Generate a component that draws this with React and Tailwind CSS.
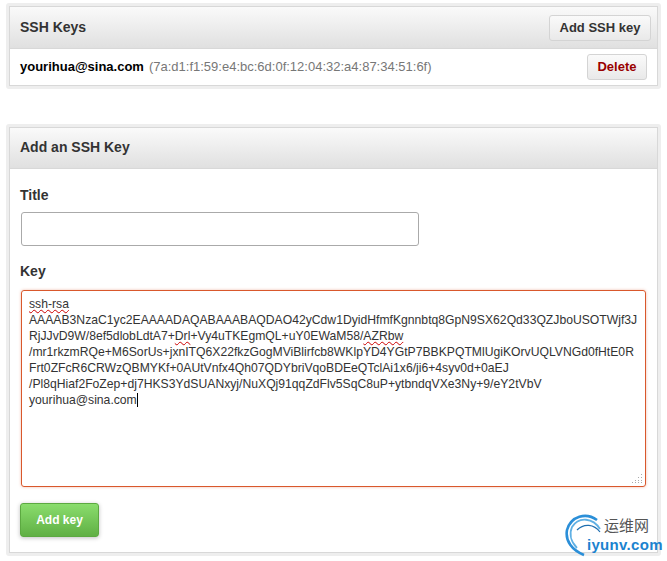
const font = { fontFamily: '"Liberation Sans", "Noto Sans CJK SC", sans-serif' };

function Panel({ title, action, children, className = "", headerClass = "h-[42px]" }) {
  return (
    <section className={"rounded-[3px] bg-[#eeeeee] p-[3px] " + className}>
      <div className="border border-[#d8d8d8] bg-white">
        <div className={"flex items-center justify-between border-b border-[#d8d8d8] bg-gradient-to-b from-[#fafafa] to-[#e0e0e0] pl-[10px] pr-[6px] " + headerClass}>
          <h3 className="text-[14px] font-bold text-[#333333]">{title}</h3>
          {action}
        </div>
        {children}
      </div>
    </section>
  );
}

function GrayButton({ children, className = "" }) {
  return (
    <button className={"rounded-[3px] border border-[#d4d4d4] bg-gradient-to-b from-[#fafafa] to-[#e9e9e9] text-[13px] font-bold " + className}>
      {children}
    </button>
  );
}

const Wavy = ({ children }) => (
  <span className="underline decoration-wavy decoration-[#cc0000] decoration-1 underline-offset-[1px]">{children}</span>
);

export default function App() {
  return (
    <div style={font} className="h-[561px] w-[667px] overflow-hidden bg-white pl-[6px] pt-[3px]">
      <div className="relative w-[655px]">
        <Panel
          title="SSH Keys"
          action={<GrayButton className="h-[26px] w-[102px] text-[#333333]">Add SSH key</GrayButton>}
        >
          <div className="flex h-[36px] items-center justify-between pl-[10px] pr-[10px]">
            <div className="text-[13px]">
              <strong className="font-bold text-black">yourihua@sina.com</strong>
              <span className="ml-[5px] text-[#777777]">(7a:d1:f1:59:e4:bc:6d:0f:12:04:32:a4:87:34:51:6f)</span>
            </div>
            <GrayButton className="h-[26px] w-[60px] text-[#990000]">Delete</GrayButton>
          </div>
        </Panel>

        <Panel title="Add an SSH Key" className="mt-[35px]" headerClass="h-[41px] pb-[2px]">
          <form className="h-[383px] px-[10px] pt-[18px]">
            <label className="block text-[14px] font-bold leading-[17px] text-[#333333]">Title</label>
            <div className="ml-px mt-[8px] h-[34px] w-[398px] rounded-[3px] border border-[#aaaaaa] bg-white" />
            <label className="mt-[17px] block text-[14px] font-bold leading-[17px] text-[#333333]">Key</label>
            <div className="relative ml-px mt-[10px] h-[197px] w-[625px] rounded-[3px] border border-[#d9582c] px-[7px] pt-[5px] text-[12.18px] leading-[16px] text-[#333333] shadow-[0_0_3px_rgba(217,88,44,0.4)]">
              <div className="whitespace-nowrap"><Wavy>ssh-rsa</Wavy></div>
              <div className="whitespace-nowrap">AAAAB3NzaC1yc2EAAAADAQABAAABAQDAO42yCdw1DyidHfmfKgnnbtq8GpN9SX62Qd33QZJboUSOTWjf3J</div>
              <div className="whitespace-nowrap">RjJJvD9W/8ef5dlobLdtA7+<Wavy>Drl</Wavy>+Vy4uTKEgmQL+uY0EWaM58/<Wavy>AZRbw</Wavy></div>
              <div className="whitespace-nowrap">/mr1rkzmRQe+M6SorUs+jxnITQ6X22fkzGogMViBlirfcb8WKlpYD4YGtP7BBKPQTMlUgiKOrvUQLVNGd0fHtE0R</div>
              <div className="whitespace-nowrap">Frt0ZFcR6CRWzQBMYKf+0AUtVnfx4Qh07QDYbriVqoBDEeQTclAi1x6/ji6+4syv0d+0aEJ</div>
              <div className="whitespace-nowrap">/Pl8qHiaf2FoZep+dj7HKS3YdSUANxyj/NuXQj91qqZdFlv5SqC8uP+ytbndqVXe3Ny+9/eY2tVbV</div>
              <div className="whitespace-nowrap"><span className="border-r border-black">yourihua@sina.com</span></div>
              <svg className="absolute bottom-[2px] right-[2px]" width="12" height="12" viewBox="0 0 12 12" fill="#aaaaaa">
                <rect x="10" y="2" width="1" height="1" /><rect x="10" y="5" width="1" height="1" /><rect x="10" y="8" width="1" height="1" />
                <rect x="7" y="5" width="1" height="1" /><rect x="7" y="8" width="1" height="1" /><rect x="4" y="8" width="1" height="1" />
                <rect x="10" y="10" width="1" height="1" /><rect x="7" y="10" width="1" height="1" /><rect x="4" y="10" width="1" height="1" /><rect x="1" y="10" width="1" height="1" />
              </svg>
            </div>
            <button className="mt-[16px] h-[34px] w-[79px] rounded-[3px] border border-[#5ca941] bg-gradient-to-b from-[#8add6d] to-[#60b044] text-[12px] font-bold text-white shadow-[0_1px_4px_rgba(0,0,0,0.25)]">
              Add key
            </button>
          </form>
        </Panel>

        <div className="absolute left-[558px] top-[510px] h-[48px] w-[103px]">
          <svg className="absolute left-0 top-0" width="60" height="46" viewBox="0 0 60 46" fill="none">
            <path d="M33 7 C22 -1 7 3 3 17 C1 28 8 37 20 42" stroke="#2b8fd8" strokeWidth="2.6" />
            <path d="M36 16 C29 5 15 3 8 14 C5 21 7 29 13 35" stroke="#5fb0e4" strokeWidth="1.8" />
            <path d="M36 19 C30 11 20 10 13 17" stroke="#1f6fb0" strokeWidth="1.2" />
          </svg>
          <span className="absolute left-[40px] top-[4px] whitespace-nowrap text-[15px] leading-[18px] text-[#555555]">运维网</span>
          <span className="absolute left-[23px] top-[23px] whitespace-nowrap text-[15px] font-bold leading-[18px] tracking-[0.3px] text-[#1b83cf]">iyunv.com</span>
        </div>
      </div>
    </div>
  );
}
